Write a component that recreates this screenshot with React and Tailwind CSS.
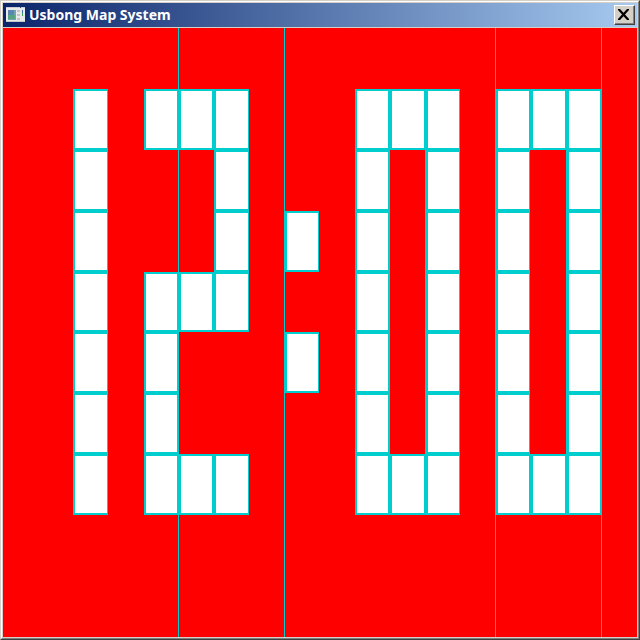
const COLS = {
  A: "w-[35px] border-l-2 border-r",
  B: "w-[35px] border-x-2",
  C: "w-[35px] border-x-2",
  D: "w-[35px] border-l-2 border-r",
  E: "w-[34px] border-l-2 border-r",
  F: "w-[35px] border-x-2",
  G: "w-[35px] border-l-2 border-r",
  H: "w-[35px] border-l-[3px] border-r",
  I: "w-[35px] border-l-[3px] border-r",
  J: "w-[36px] border-l-[3px] border-r",
  K: "w-[36px] border-l-[3px] border-r-2",
};

// Columns from left to right, with the space before each one.
const LAYOUT = [
  { id: "A", gap: "ml-[70px]", on: "1111111" },
  { id: "B", gap: "ml-[36px]", on: "1001111" },
  { id: "C", gap: "", on: "1001001" },
  { id: "D", gap: "", on: "1111001" },
  { id: "E", gap: "ml-[36px]", on: "0010100" },
  { id: "F", gap: "ml-[36px]", on: "1111111" },
  { id: "G", gap: "", on: "1000001" },
  { id: "H", gap: "", on: "1111111" },
  { id: "I", gap: "ml-[35px]", on: "1111111" },
  { id: "J", gap: "", on: "1000001" },
  { id: "K", gap: "", on: "1111111" },
];

const HEIGHTS = ["h-[61px]", "h-[61px]", "h-[61px]", "h-[60px]", "h-[61px]", "h-[61px]", "h-[61px]"];

function Column({ id, gap, on }) {
  return (
    <div className={`flex shrink-0 flex-col ${gap}`}>
      {HEIGHTS.map((h, i) => (
        <div
          key={i}
          className={`${h} ${COLS[id]} border-y-2 ${on[i] === "1" ? "border-[#00cdcd] bg-white" : "border-transparent"}`}
        />
      ))}
    </div>
  );
}

function AppIcon() {
  return (
    <svg width="19" height="16" viewBox="0 0 19 16" shapeRendering="crispEdges">
      <rect width="19" height="15" fill="#e9ebea" />
      <rect width="19" height="1" fill="#c9cdd0" />
      <rect x="14" width="1" height="1" fill="#36508c" />
      <rect y="14" width="19" height="1" fill="#c4c8c8" />
      <rect x="2" y="3" width="8" height="10" fill="#72a6b4" />
      <rect x="2" y="3" width="6" height="5" fill="#5b86ae" />
      <rect x="2" y="8" width="7" height="4" fill="#57a280" />
      <rect x="11" y="3" width="3" height="2" fill="#c2c5c8" />
      <rect x="11" y="7" width="3" height="2" fill="#c2c5c8" />
      <rect x="11" y="11" width="3" height="2" fill="#c2c5c8" />
      <rect x="16" y="3" width="1" height="3" fill="#3a6fb8" />
      <rect x="16" y="6" width="1" height="3" fill="#42a35c" />
    </svg>
  );
}

export default function App() {
  return (
    <div className="h-[640px] w-[640px] overflow-hidden border border-t-[#d4d0c8] border-l-[#d4d0c8] border-r-[#404040] border-b-[#404040]">
      <div className="flex h-full flex-col border border-t-white border-l-white border-r-[#808080] border-b-[#808080]">
        <div className="flex h-full flex-col border border-[#d4d0c8]">
          <div className="flex h-6 shrink-0 items-center bg-linear-to-r/srgb from-[#0a246a] to-[#a6caf0] pr-[2px] pl-[3px]">
            <AppIcon />
            <span className="ml-1 font-['Noto_Sans','Open_Sans',sans-serif] text-[14px] leading-6 font-bold whitespace-nowrap text-white">
              Usbong Map System
            </span>
            <button
              aria-label="Close"
              className="ml-auto flex h-5 w-[21px] border border-t-white border-l-white border-r-[#404040] border-b-[#404040] bg-[#d4d0c8]"
            >
              <span className="flex h-full w-full border-r border-b border-[#808080] pt-[3px] pl-[3px]">
                <svg width="11" height="11" viewBox="0 0 11 11" className="shrink-0">
                  <path d="M0 0H2L5.5 3.7L9 0H11V1L7 5.5L11 10V11H9L5.5 7.3L2 11H0V10L4 5.5L0 1Z" fill="#000" />
                </svg>
              </span>
            </button>
          </div>
          <div className="h-px shrink-0 bg-[#d4d0c8]" />
          <div className="relative flex min-h-0 flex-1 bg-[#ff0000] pt-[61px]">
            <div className="absolute inset-y-0 left-[175px] w-px bg-[#00cdcd]" />
            <div className="absolute inset-y-0 left-[281px] w-px bg-[#00cdcd]" />
            <div className="absolute inset-y-0 left-[492px] w-px bg-[#5aa0a0]" />
            <div className="absolute inset-y-0 left-[598px] w-px bg-[#5aa0a0]" />
            <div className="relative flex">
              {LAYOUT.map((c) => (
                <Column key={c.id} {...c} />
              ))}
            </div>
          </div>
        </div>
      </div>
    </div>
  );
}
